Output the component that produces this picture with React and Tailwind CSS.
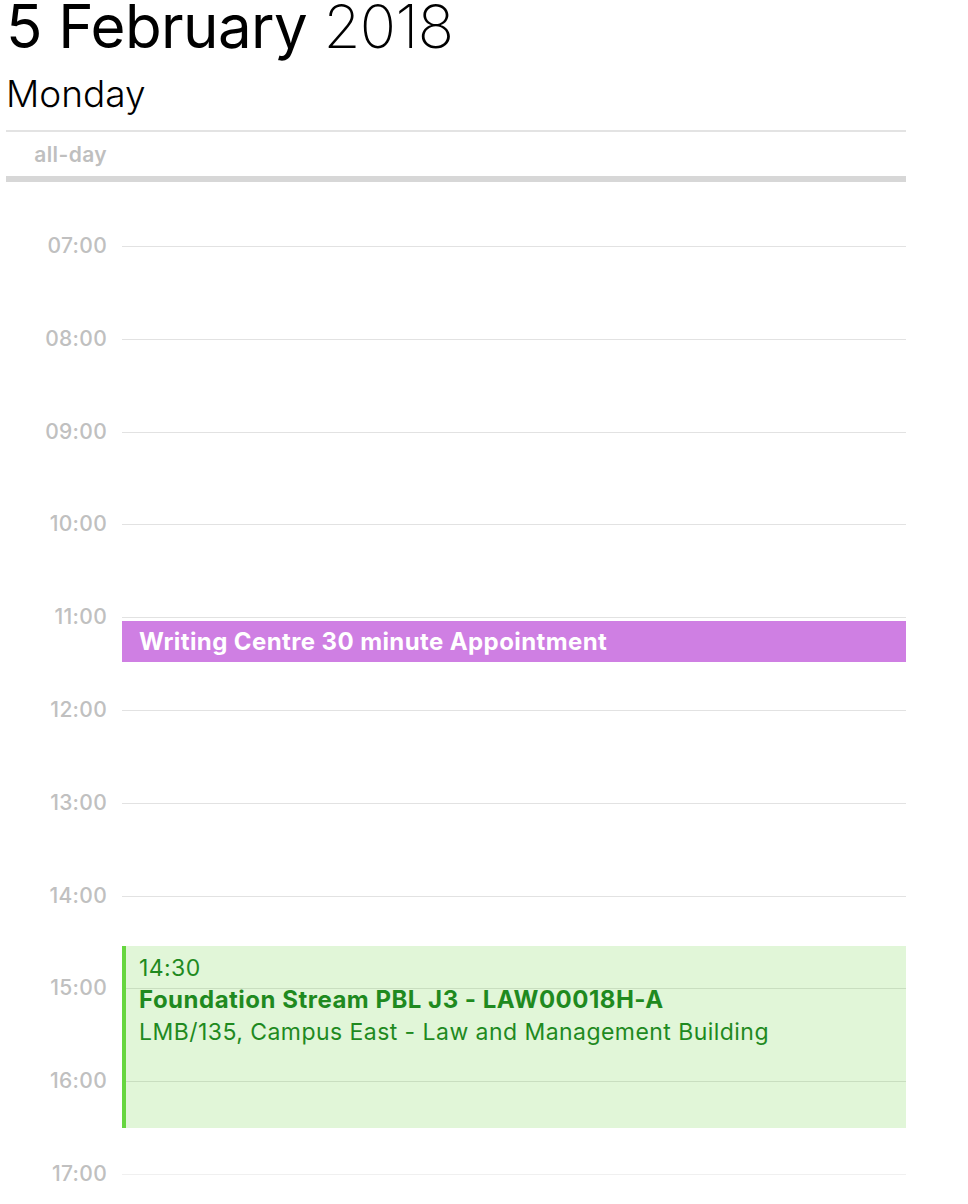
const HOURS = ['07:00', '08:00', '09:00', '10:00', '11:00', '12:00', '13:00', '14:00', '15:00', '16:00', '17:00']

// one hour in the day grid, px
const HOUR = 92.8

export default function App() {
  return (
    <div className="min-h-screen bg-white font-['Inter','Liberation_Sans',sans-serif] antialiased">
      <div className="ml-[6px] w-[900px]">
        {/* Header */}
        <h1 className="text-[60px] leading-[52px] tracking-[-0.6px] text-black whitespace-nowrap">
          <span className="font-normal">5 February</span>{' '}
          <span className="font-extralight">2018</span>
        </h1>
        <h2 className="mt-[20px] text-[37px] leading-[44px] font-light text-black">Monday</h2>

        {/* All-day row */}
        <div className="mt-[14px] border-t-2 border-[#e3e3e3] h-[52px] border-b-[6px] border-b-[#d7d7d7] flex">
          <div className="w-[101px] text-right pt-[7px] text-[21px] font-semibold tracking-[0.4px] text-[#bfbfbf]">all-day</div>
        </div>

        {/* Day grid */}
        <div className="pt-[64px]">
          <div className="relative">
            {HOURS.map((h, i) => {
              const last = i === HOURS.length - 1
              return (
                <div key={h} className="flex" style={{ height: last ? 30 : HOUR }}>
                  <div className="w-[116px] pr-[15px] text-right">
                    <span className="block -translate-y-1/2 text-[21px] leading-[24px] font-medium tracking-[0.3px] text-[#c0c0c0]">{h}</span>
                  </div>
                  <div className={`flex-1 border-t ${last ? 'border-[#f0f0f0]' : 'border-[#e2e2e2]'}`} />
                </div>
              )
            })}

            {/* Events */}
            <div className="absolute left-[116px] right-0 top-[375px] h-[41px] bg-[#cf7fe3] px-[17px] flex items-center">
              <span className="text-[24px] font-bold text-white tracking-[0.4px]">Writing Centre 30 minute Appointment</span>
            </div>

            <div className="absolute left-[116px] right-0 top-[700px] h-[182px] bg-[#6ad23c]/20 border-l-4 border-[#66d63f] pl-[13px] pt-[6px] text-[#1f8a1f] leading-[32px]">
              <div className="text-[23px] font-normal tracking-[0.4px]">14:30</div>
              <div className="text-[24px] font-bold tracking-[0.5px]">Foundation Stream PBL J3 - LAW00018H-A</div>
              <div className="text-[23px] font-normal tracking-[0.45px]">LMB/135, Campus East - Law and Management Building</div>
            </div>
          </div>
        </div>
      </div>
    </div>
  )
}
